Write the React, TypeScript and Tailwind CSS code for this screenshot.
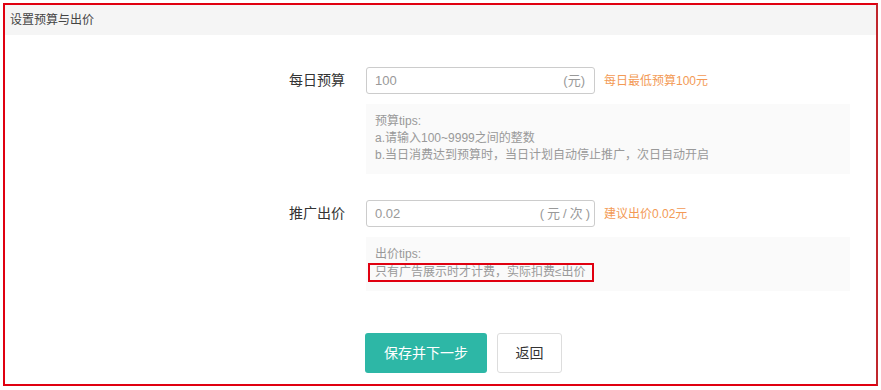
const font = { fontFamily: '"Liberation Sans", "Noto Sans CJK SC", sans-serif' }

function Field({ label, value, unit, hint, wide }: { label: string; value: string; unit: string; hint: string; wide?: boolean }) {
  return (
    <div className="flex h-[27px] items-center">
      <span className="w-[340px] text-right text-[14px] text-[#333]">{label}</span>
      <div className="ml-[21px] flex h-[27px] w-[229px] items-center justify-between rounded-[3px] border border-[#ccc] pl-[8px] text-[13px] text-[#999]">
        <span>{value}</span>
        {wide ? <span className="pr-[1px] tracking-[3px]">{unit}</span> : <span className="pr-[9px]">{unit}</span>}
      </div>
      <span className="ml-[9px] text-[12px] text-[#f39a55]">{hint}</span>
    </div>
  )
}

export default function App() {
  return (
    <div className="h-[390px] w-[881px] bg-white pl-[3px] pt-[3px]" style={font}>
      <div className="flex h-[383px] w-[875px] flex-col border-2 border-[#e00010] border-r-[#c0262c]">
        <div className="flex h-[30px] items-center bg-[#f5f5f5] pl-[5px] text-[12px] text-[#444]">设置预算与出价</div>

        <div className="pt-[32px]">
          <Field label="每日预算" value="100" unit="(元)" hint="每日最低预算100元" />
          <div className="ml-[361px] mt-[10px] w-[484px] bg-[#fafafa] pb-[10px] pl-[9px] pt-[9px] text-[12px] leading-[17px] text-[#999]">
            <p>预算tips:</p>
            <p>a.请输入100~9999之间的整数</p>
            <p>b.当日消费达到预算时，当日计划自动停止推广，次日自动开启</p>
          </div>

          <div className="mt-[26px]">
            <Field label="推广出价" value="0.02" unit="(元/次)" hint="建议出价0.02元" wide />
          </div>
          <div className="ml-[361px] mt-[10px] w-[484px] bg-[#fafafa] pb-[9px] pl-[9px] pt-[9px] text-[12px] leading-[17px] text-[#999]">
            <p>出价tips:</p>
            <p>
              <span className="-ml-[7px] inline-block border-2 border-[#e00010] pl-[5px] pr-[6px] leading-[15px]">
                只有广告展示时才计费，实际扣费≤出价
              </span>
            </p>
          </div>

          <div className="ml-[360px] mt-[42px] flex gap-[10px]">
            <button className="h-[40px] w-[122px] rounded-[3px] bg-[#2db7a6] text-[14px] text-white">保存并下一步</button>
            <button className="h-[40px] w-[65px] rounded-[3px] border border-[#ddd] bg-white text-[14px] text-[#333]">返回</button>
          </div>
        </div>
      </div>
    </div>
  )
}
